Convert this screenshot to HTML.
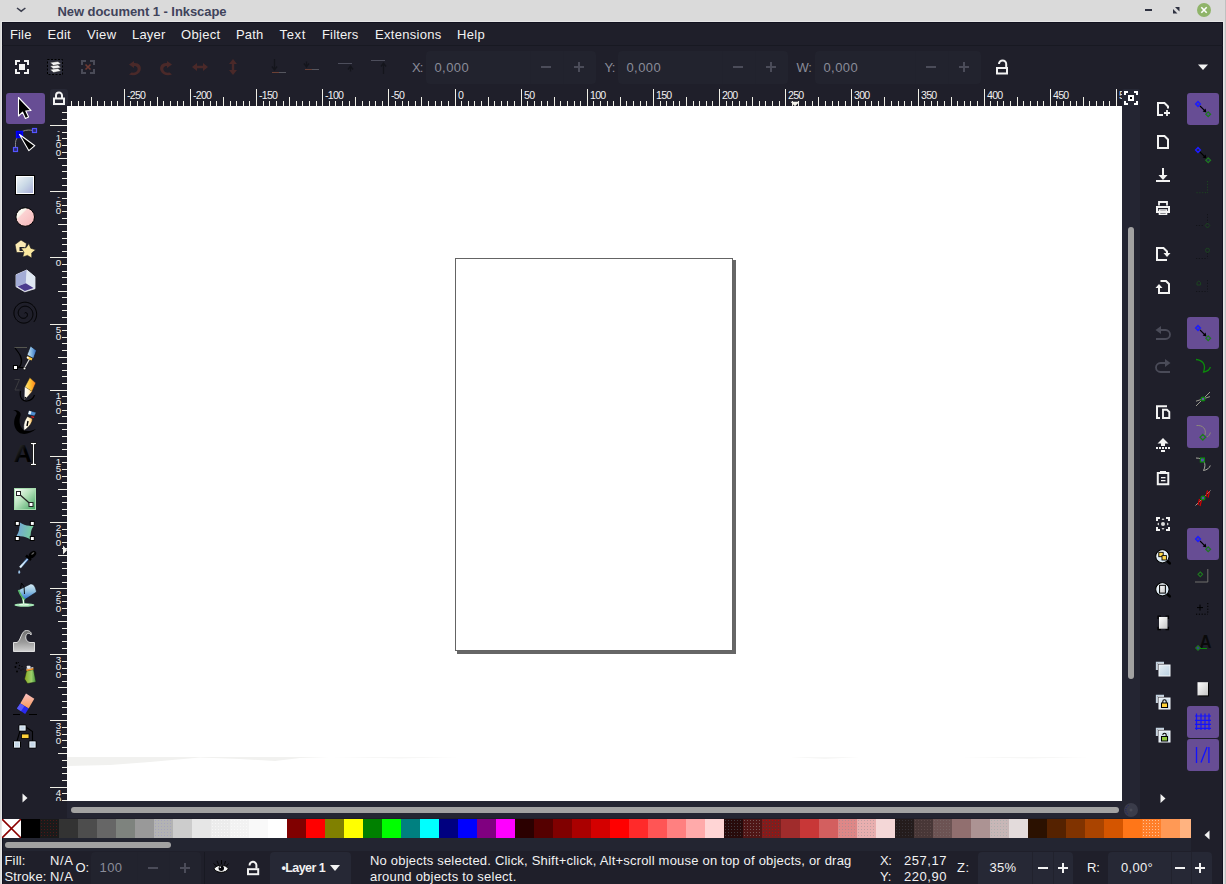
<!DOCTYPE html><html><head><meta charset='utf-8'><title>New document 1 - Inkscape</title><style>
*{box-sizing:border-box;margin:0;padding:0}
html,body{width:1226px;height:884px;overflow:hidden;background:#dadada;}
body{position:relative;font-family:"Liberation Sans","DejaVu Sans",sans-serif;font-size:13px;color:#f2f2f2;}
.abs{position:absolute}
#win{position:absolute;left:2px;top:22px;width:1221px;height:862px;background:#1f1f2a;border:1px solid #11111f;border-bottom:0}
.t{position:absolute;white-space:nowrap;line-height:16px;}
.spin{position:absolute;background:#262835;border-radius:4px;}
.spin i{position:absolute;top:0;bottom:0;width:1px;background:#21222d;}
.pb{position:absolute;background:#674d94;border-radius:3px;}
svg{position:absolute;overflow:visible}
</style></head><body>
<div class='t' style='left:57.5px;top:3.5px;font-size:13px;letter-spacing:-0.060px;font-weight:bold;color:#40435a;'>New document 1 - Inkscape</div>
<svg style='left:15px;top:5px' width='13' height='10'><path d='M2 3 L6.200 6.200 L10.400 3' fill='none' stroke='#3b3e4d' stroke-width='1.500'/></svg>
<div class='abs' style='left:1145px;top:9px;width:7px;height:2px;background:#2e3140'></div>
<svg style='left:1172px;top:6px' width='9' height='9'><path d='M3 1 H7.5 V5.5 Z M1 3 L5.5 7.5 H1 Z' fill='#2e3140'/></svg>
<svg style='left:1196px;top:2px' width='16' height='16'><circle cx='8' cy='8' r='7' fill='#8fb469'/><path d='M5.3 5.3 L10.7 10.7 M10.7 5.3 L5.3 10.7' stroke='#fff' stroke-width='1.6'/></svg>
<div class='abs' style='left:1px;top:21px;width:1223px;height:863px;background:#e5e5e5'></div>
<div class='abs' style='left:1225px;top:0;width:1px;height:884px;background:#c0c0c0'></div>
<div id='win'></div>
<div class='t' style='left:10px;top:26.8px;font-size:13px;letter-spacing:0.138px;'>File</div>
<div class='t' style='left:47.5px;top:26.8px;font-size:13px;letter-spacing:0.275px;'>Edit</div>
<div class='t' style='left:87px;top:26.8px;font-size:13px;letter-spacing:0.389px;'>View</div>
<div class='t' style='left:132px;top:26.8px;font-size:13px;letter-spacing:0.196px;'>Layer</div>
<div class='t' style='left:181px;top:26.8px;font-size:13px;letter-spacing:0.321px;'>Object</div>
<div class='t' style='left:236px;top:26.8px;font-size:13px;letter-spacing:0.189px;'>Path</div>
<div class='t' style='left:279.5px;top:26.8px;font-size:13px;letter-spacing:0.665px;'>Text</div>
<div class='t' style='left:322px;top:26.8px;font-size:13px;letter-spacing:0.159px;'>Filters</div>
<div class='t' style='left:375px;top:26.8px;font-size:13px;letter-spacing:0.291px;'>Extensions</div>
<div class='t' style='left:457px;top:26.8px;font-size:13px;letter-spacing:0.316px;'>Help</div>
<div class='abs' style='left:2px;top:45px;width:1221px;height:1px;background:#181922'></div>
<div class='t' style='left:412px;top:60.2px;font-size:13px;letter-spacing:-0.891px;color:#8a8c99;'>X:</div>
<div class='spin' style='left:426px;top:51px;width:170px;height:33px;background:#22232e'><i style='left:104px'></i><i style='left:137px'></i></div>
<div class='t' style='left:434.5px;top:60.2px;font-size:13px;letter-spacing:0.394px;color:#8a8c99;'>0,000</div>
<div class='abs' style='left:541px;top:66px;width:10px;height:2px;background:#4b4c59'></div>
<div class='abs' style='left:574px;top:66px;width:10px;height:2px;background:#4b4c59'></div>
<div class='abs' style='left:578px;top:62px;width:2px;height:10px;background:#4b4c59'></div>
<div class='t' style='left:604.5px;top:60.2px;font-size:13px;letter-spacing:-0.783px;color:#8a8c99;'>Y:</div>
<div class='spin' style='left:618px;top:51px;width:170px;height:33px;background:#22232e'><i style='left:104px'></i><i style='left:137px'></i></div>
<div class='t' style='left:626.5px;top:60.2px;font-size:13px;letter-spacing:0.394px;color:#8a8c99;'>0,000</div>
<div class='abs' style='left:733px;top:66px;width:10px;height:2px;background:#4b4c59'></div>
<div class='abs' style='left:766px;top:66px;width:10px;height:2px;background:#4b4c59'></div>
<div class='abs' style='left:770px;top:62px;width:2px;height:10px;background:#4b4c59'></div>
<div class='t' style='left:796.5px;top:60.2px;font-size:13px;letter-spacing:-0.323px;color:#8a8c99;'>W:</div>
<div class='spin' style='left:815px;top:51px;width:166px;height:33px;background:#22232e'><i style='left:100px'></i><i style='left:133px'></i></div>
<div class='t' style='left:823.5px;top:60.2px;font-size:13px;letter-spacing:0.394px;color:#8a8c99;'>0,000</div>
<div class='abs' style='left:926px;top:66px;width:10px;height:2px;background:#4b4c59'></div>
<div class='abs' style='left:959px;top:66px;width:10px;height:2px;background:#4b4c59'></div>
<div class='abs' style='left:963px;top:62px;width:2px;height:10px;background:#4b4c59'></div>
<div class='abs' style='left:67px;top:106px;width:1055px;height:695px;background:#fff'></div>
<svg style='left:0;top:0' width='1226' height='884'><path d='M67 757 H300 L330 758 H300 L275 761 L240 759 L200 757.500 L150 762 L110 765 L67 766 Z' fill='#f1f1ef'/><path d='M330 757 H460 L400 758.500 Z M790 757 H860 L825 759 Z M960 757 H1090 L1030 758.500 Z' fill='#f7f7f6'/></svg>
<div class='abs' style='left:733px;top:260px;width:3px;height:394px;background:#666'></div>
<div class='abs' style='left:457px;top:651px;width:279px;height:3px;background:#666'></div>
<div class='abs' style='left:455px;top:258px;width:278px;height:393px;border:1px solid #646464;background:#fff'></div>
<div class='abs' style='left:1122px;top:106px;width:18px;height:712px;background:#242532'></div>
<div class='abs' style='left:67px;top:801px;width:1073px;height:17px;background:#242532'></div>
<div class='abs' style='left:1128px;top:227px;width:6px;height:452px;background:#a2a2a2;border-radius:3px'></div>
<div class='abs' style='left:71px;top:807px;width:1048px;height:6px;background:#a2a2a2;border-radius:3px'></div>
<svg style='left:0;top:0' width='1226' height='884' shape-rendering='crispEdges'><path d='M71.5 101V106M78.5 101V106M84.5 101V106M91.5 97V106M97.5 101V106M104.5 101V106M111.5 101V106M117.5 101V106M124.5 89V106M130.5 101V106M137.5 101V106M144.5 101V106M150.5 101V106M157.5 97V106M163.5 101V106M170.5 101V106M177.5 101V106M183.5 101V106M190.5 89V106M197.5 101V106M203.5 101V106M210.5 101V106M216.5 101V106M223.5 97V106M230.5 101V106M236.5 101V106M243.5 101V106M249.5 101V106M256.5 89V106M263.5 101V106M269.5 101V106M276.5 101V106M283.5 101V106M289.5 97V106M296.5 101V106M302.5 101V106M309.5 101V106M316.5 101V106M322.5 89V106M329.5 101V106M335.5 101V106M342.5 101V106M349.5 101V106M355.5 97V106M362.5 101V106M369.5 101V106M375.5 101V106M382.5 101V106M388.5 89V106M395.5 101V106M402.5 101V106M408.5 101V106M415.5 101V106M421.5 97V106M428.5 101V106M435.5 101V106M441.5 101V106M448.5 101V106M455.5 89V106M461.5 101V106M468.5 101V106M474.5 101V106M481.5 101V106M488.5 97V106M494.5 101V106M501.5 101V106M507.5 101V106M514.5 101V106M521.5 89V106M527.5 101V106M534.5 101V106M541.5 101V106M547.5 101V106M554.5 97V106M560.5 101V106M567.5 101V106M574.5 101V106M580.5 101V106M587.5 89V106M593.5 101V106M600.5 101V106M607.5 101V106M613.5 101V106M620.5 97V106M626.5 101V106M633.5 101V106M640.5 101V106M646.5 101V106M653.5 89V106M660.5 101V106M666.5 101V106M673.5 101V106M679.5 101V106M686.5 97V106M693.5 101V106M699.5 101V106M706.5 101V106M712.5 101V106M719.5 89V106M726.5 101V106M732.5 101V106M739.5 101V106M746.5 101V106M752.5 97V106M759.5 101V106M765.5 101V106M772.5 101V106M779.5 101V106M785.5 89V106M792.5 101V106M798.5 101V106M805.5 101V106M812.5 101V106M818.5 97V106M825.5 101V106M832.5 101V106M838.5 101V106M845.5 101V106M851.5 89V106M858.5 101V106M865.5 101V106M871.5 101V106M878.5 101V106M884.5 97V106M891.5 101V106M898.5 101V106M904.5 101V106M911.5 101V106M918.5 89V106M924.5 101V106M931.5 101V106M937.5 101V106M944.5 101V106M951.5 97V106M957.5 101V106M964.5 101V106M970.5 101V106M977.5 101V106M984.5 89V106M990.5 101V106M997.5 101V106M1003.5 101V106M1010.5 101V106M1017.5 97V106M1023.5 101V106M1030.5 101V106M1037.5 101V106M1043.5 101V106M1050.5 89V106M1056.5 101V106M1063.5 101V106M1070.5 101V106M1076.5 101V106M1083.5 97V106M1089.5 101V106M1096.5 101V106M1103.5 101V106M1109.5 101V106M1116.5 89V106' stroke='#f0efe6' stroke-width='1' fill='none'/><path d='M62 112.5H67M62 119.5H67M50 125.5H67M62 132.5H67M62 138.5H67M62 145.5H67M62 152.5H67M58 158.5H67M62 165.5H67M62 171.5H67M62 178.5H67M62 185.5H67M50 191.5H67M62 198.5H67M62 205.5H67M62 211.5H67M62 218.5H67M58 224.5H67M62 231.5H67M62 238.5H67M62 244.5H67M62 251.5H67M50 257.5H67M62 264.5H67M62 271.5H67M62 277.5H67M62 284.5H67M58 291.5H67M62 297.5H67M62 304.5H67M62 310.5H67M62 317.5H67M50 324.5H67M62 330.5H67M62 337.5H67M62 343.5H67M62 350.5H67M58 357.5H67M62 363.5H67M62 370.5H67M62 376.5H67M62 383.5H67M50 390.5H67M62 396.5H67M62 403.5H67M62 410.5H67M62 416.5H67M58 423.5H67M62 429.5H67M62 436.5H67M62 443.5H67M62 449.5H67M50 456.5H67M62 462.5H67M62 469.5H67M62 476.5H67M62 482.5H67M58 489.5H67M62 496.5H67M62 502.5H67M62 509.5H67M62 515.5H67M50 522.5H67M62 529.5H67M62 535.5H67M62 542.5H67M62 548.5H67M58 555.5H67M62 562.5H67M62 568.5H67M62 575.5H67M62 582.5H67M50 588.5H67M62 595.5H67M62 601.5H67M62 608.5H67M62 615.5H67M58 621.5H67M62 628.5H67M62 634.5H67M62 641.5H67M62 648.5H67M50 654.5H67M62 661.5H67M62 668.5H67M62 674.5H67M62 681.5H67M58 687.5H67M62 694.5H67M62 701.5H67M62 707.5H67M62 714.5H67M50 720.5H67M62 727.5H67M62 734.5H67M62 740.5H67M62 747.5H67M58 753.5H67M62 760.5H67M62 767.5H67M62 773.5H67M62 780.5H67M50 787.5H67M62 793.5H67M62 800.5H67' stroke='#f0efe6' stroke-width='1' fill='none'/></svg>
<svg style='left:0;top:0' width='1226' height='884'><path d='M790.5 101.800 H799.500 L795 106.200 Z M63 545.500 L67.200 550 L63 554.500 Z' fill='#f4f3ec'/></svg>
<div class='abs' style='left:67px;top:87px;width:1055px;height:19px;overflow:hidden'>
<div class='t' style='left:60.0px;top:2.5px;font-size:10.6px;line-height:10px;color:#f0f0f0;letter-spacing:-0.75px'>-250</div>
<div class='t' style='left:126.0px;top:2.5px;font-size:10.6px;line-height:10px;color:#f0f0f0;letter-spacing:-0.75px'>-200</div>
<div class='t' style='left:192.0px;top:2.5px;font-size:10.6px;line-height:10px;color:#f0f0f0;letter-spacing:-0.75px'>-150</div>
<div class='t' style='left:258.0px;top:2.5px;font-size:10.6px;line-height:10px;color:#f0f0f0;letter-spacing:-0.75px'>-100</div>
<div class='t' style='left:324.0px;top:2.5px;font-size:10.6px;line-height:10px;color:#f0f0f0;letter-spacing:-0.75px'>-50</div>
<div class='t' style='left:391.0px;top:2.5px;font-size:10.6px;line-height:10px;color:#f0f0f0;letter-spacing:-0.75px'>0</div>
<div class='t' style='left:457.0px;top:2.5px;font-size:10.6px;line-height:10px;color:#f0f0f0;letter-spacing:-0.75px'>50</div>
<div class='t' style='left:523.0px;top:2.5px;font-size:10.6px;line-height:10px;color:#f0f0f0;letter-spacing:-0.75px'>100</div>
<div class='t' style='left:589.0px;top:2.5px;font-size:10.6px;line-height:10px;color:#f0f0f0;letter-spacing:-0.75px'>150</div>
<div class='t' style='left:655.0px;top:2.5px;font-size:10.6px;line-height:10px;color:#f0f0f0;letter-spacing:-0.75px'>200</div>
<div class='t' style='left:721.0px;top:2.5px;font-size:10.6px;line-height:10px;color:#f0f0f0;letter-spacing:-0.75px'>250</div>
<div class='t' style='left:787.0px;top:2.5px;font-size:10.6px;line-height:10px;color:#f0f0f0;letter-spacing:-0.75px'>300</div>
<div class='t' style='left:854.0px;top:2.5px;font-size:10.6px;line-height:10px;color:#f0f0f0;letter-spacing:-0.75px'>350</div>
<div class='t' style='left:920.0px;top:2.5px;font-size:10.6px;line-height:10px;color:#f0f0f0;letter-spacing:-0.75px'>400</div>
<div class='t' style='left:986.0px;top:2.5px;font-size:10.6px;line-height:10px;color:#f0f0f0;letter-spacing:-0.75px'>450</div>
<div class='t' style='left:1052.0px;top:2.5px;font-size:10.6px;line-height:10px;color:#f0f0f0;letter-spacing:-0.75px'>500</div>
</div>
<div class='abs' style='left:50px;top:106px;width:17px;height:695px;overflow:hidden'>
<div class='t' style='left:4.5px;top:21.1px;font-size:8px;line-height:8px;color:#f0f0f0;width:8px;text-align:center'>-</div>
<div class='t' style='left:4.5px;top:27.7px;font-size:9.8px;line-height:8px;color:#f0f0f0;width:8px;text-align:center'>1</div>
<div class='t' style='left:4.5px;top:35.4px;font-size:9.8px;line-height:8px;color:#f0f0f0;width:8px;text-align:center'>0</div>
<div class='t' style='left:4.5px;top:43.1px;font-size:9.8px;line-height:8px;color:#f0f0f0;width:8px;text-align:center'>0</div>
<div class='t' style='left:4.5px;top:87.1px;font-size:8px;line-height:8px;color:#f0f0f0;width:8px;text-align:center'>-</div>
<div class='t' style='left:4.5px;top:93.7px;font-size:9.8px;line-height:8px;color:#f0f0f0;width:8px;text-align:center'>5</div>
<div class='t' style='left:4.5px;top:101.4px;font-size:9.8px;line-height:8px;color:#f0f0f0;width:8px;text-align:center'>0</div>
<div class='t' style='left:4.5px;top:152.5px;font-size:9.8px;line-height:8px;color:#f0f0f0;width:8px;text-align:center'>0</div>
<div class='t' style='left:4.5px;top:219.5px;font-size:9.8px;line-height:8px;color:#f0f0f0;width:8px;text-align:center'>5</div>
<div class='t' style='left:4.5px;top:227.2px;font-size:9.8px;line-height:8px;color:#f0f0f0;width:8px;text-align:center'>0</div>
<div class='t' style='left:4.5px;top:285.5px;font-size:9.8px;line-height:8px;color:#f0f0f0;width:8px;text-align:center'>1</div>
<div class='t' style='left:4.5px;top:293.2px;font-size:9.8px;line-height:8px;color:#f0f0f0;width:8px;text-align:center'>0</div>
<div class='t' style='left:4.5px;top:300.9px;font-size:9.8px;line-height:8px;color:#f0f0f0;width:8px;text-align:center'>0</div>
<div class='t' style='left:4.5px;top:351.5px;font-size:9.8px;line-height:8px;color:#f0f0f0;width:8px;text-align:center'>1</div>
<div class='t' style='left:4.5px;top:359.2px;font-size:9.8px;line-height:8px;color:#f0f0f0;width:8px;text-align:center'>5</div>
<div class='t' style='left:4.5px;top:366.9px;font-size:9.8px;line-height:8px;color:#f0f0f0;width:8px;text-align:center'>0</div>
<div class='t' style='left:4.5px;top:417.5px;font-size:9.8px;line-height:8px;color:#f0f0f0;width:8px;text-align:center'>2</div>
<div class='t' style='left:4.5px;top:425.2px;font-size:9.8px;line-height:8px;color:#f0f0f0;width:8px;text-align:center'>0</div>
<div class='t' style='left:4.5px;top:432.9px;font-size:9.8px;line-height:8px;color:#f0f0f0;width:8px;text-align:center'>0</div>
<div class='t' style='left:4.5px;top:483.5px;font-size:9.8px;line-height:8px;color:#f0f0f0;width:8px;text-align:center'>2</div>
<div class='t' style='left:4.5px;top:491.2px;font-size:9.8px;line-height:8px;color:#f0f0f0;width:8px;text-align:center'>5</div>
<div class='t' style='left:4.5px;top:498.9px;font-size:9.8px;line-height:8px;color:#f0f0f0;width:8px;text-align:center'>0</div>
<div class='t' style='left:4.5px;top:549.5px;font-size:9.8px;line-height:8px;color:#f0f0f0;width:8px;text-align:center'>3</div>
<div class='t' style='left:4.5px;top:557.2px;font-size:9.8px;line-height:8px;color:#f0f0f0;width:8px;text-align:center'>0</div>
<div class='t' style='left:4.5px;top:564.9px;font-size:9.8px;line-height:8px;color:#f0f0f0;width:8px;text-align:center'>0</div>
<div class='t' style='left:4.5px;top:615.5px;font-size:9.8px;line-height:8px;color:#f0f0f0;width:8px;text-align:center'>3</div>
<div class='t' style='left:4.5px;top:623.2px;font-size:9.8px;line-height:8px;color:#f0f0f0;width:8px;text-align:center'>5</div>
<div class='t' style='left:4.5px;top:630.9px;font-size:9.8px;line-height:8px;color:#f0f0f0;width:8px;text-align:center'>0</div>
<div class='t' style='left:4.5px;top:682.5px;font-size:9.8px;line-height:8px;color:#f0f0f0;width:8px;text-align:center'>4</div>
<div class='t' style='left:4.5px;top:690.2px;font-size:9.8px;line-height:8px;color:#f0f0f0;width:8px;text-align:center'>0</div>
<div class='t' style='left:4.5px;top:697.9px;font-size:9.8px;line-height:8px;color:#f0f0f0;width:8px;text-align:center'>0</div>
</div>
<div class='abs' style='left:50px;top:89px;width:18px;height:17px;background:#272835;border-radius:3px'></div>
<div class='abs' style='left:2px;top:819px;width:1189px;height:19px;overflow:hidden'>
<div class='abs' style='left:0;top:0;width:19px;height:19px;background:#fff'></div>
<svg style='left:0;top:0' width='19' height='19'><path d='M0 0L19 19M19 0L0 19' stroke='#8b0000' stroke-width='1.6'/></svg>
<div class='abs' style='left:19px;top:0;width:19px;height:19px;background:#000000;'></div>
<div class='abs' style='left:38px;top:0;width:19px;height:19px;background:radial-gradient(circle,rgba(120,20,20,.55) .7px,transparent 1px) 0 0/3px 3px,#1a1a1a;'></div>
<div class='abs' style='left:57px;top:0;width:19px;height:19px;background:#333333;'></div>
<div class='abs' style='left:76px;top:0;width:19px;height:19px;background:#4d4d4d;'></div>
<div class='abs' style='left:95px;top:0;width:19px;height:19px;background:#666666;'></div>
<div class='abs' style='left:114px;top:0;width:19px;height:19px;background:#7e837e;'></div>
<div class='abs' style='left:133px;top:0;width:19px;height:19px;background:#999999;'></div>
<div class='abs' style='left:152px;top:0;width:19px;height:19px;background:radial-gradient(circle,rgba(150,150,200,.5) .7px,transparent 1px) 0 0/3px 3px,#b3b3b3;'></div>
<div class='abs' style='left:171px;top:0;width:19px;height:19px;background:#cccccc;'></div>
<div class='abs' style='left:190px;top:0;width:19px;height:19px;background:#e6e6e6;'></div>
<div class='abs' style='left:209px;top:0;width:19px;height:19px;background:radial-gradient(circle,rgba(255,255,255,.5) .7px,transparent 1px) 0 0/3px 3px,#ececec;'></div>
<div class='abs' style='left:228px;top:0;width:19px;height:19px;background:radial-gradient(circle,rgba(255,255,255,.5) .7px,transparent 1px) 0 0/3px 3px,#f2f2f2;'></div>
<div class='abs' style='left:247px;top:0;width:19px;height:19px;background:#f9f9f9;'></div>
<div class='abs' style='left:266px;top:0;width:19px;height:19px;background:#ffffff;'></div>
<div class='abs' style='left:285px;top:0;width:19px;height:19px;background:#800000;'></div>
<div class='abs' style='left:304px;top:0;width:19px;height:19px;background:#ff0000;'></div>
<div class='abs' style='left:323px;top:0;width:19px;height:19px;background:#808000;'></div>
<div class='abs' style='left:342px;top:0;width:19px;height:19px;background:#ffff00;'></div>
<div class='abs' style='left:361px;top:0;width:19px;height:19px;background:#008000;'></div>
<div class='abs' style='left:380px;top:0;width:19px;height:19px;background:#00ff00;'></div>
<div class='abs' style='left:399px;top:0;width:19px;height:19px;background:#008080;'></div>
<div class='abs' style='left:418px;top:0;width:19px;height:19px;background:#00ffff;'></div>
<div class='abs' style='left:437px;top:0;width:19px;height:19px;background:#000080;'></div>
<div class='abs' style='left:456px;top:0;width:19px;height:19px;background:#0000ff;'></div>
<div class='abs' style='left:475px;top:0;width:19px;height:19px;background:#800080;'></div>
<div class='abs' style='left:494px;top:0;width:19px;height:19px;background:#ff00ff;'></div>
<div class='abs' style='left:513px;top:0;width:19px;height:19px;background:#2b0000;'></div>
<div class='abs' style='left:532px;top:0;width:19px;height:19px;background:#550000;'></div>
<div class='abs' style='left:551px;top:0;width:19px;height:19px;background:#800000;'></div>
<div class='abs' style='left:570px;top:0;width:19px;height:19px;background:#aa0000;'></div>
<div class='abs' style='left:589px;top:0;width:19px;height:19px;background:#d40000;'></div>
<div class='abs' style='left:608px;top:0;width:19px;height:19px;background:#ff0000;'></div>
<div class='abs' style='left:627px;top:0;width:19px;height:19px;background:#ff2a2a;'></div>
<div class='abs' style='left:646px;top:0;width:19px;height:19px;background:#ff5555;'></div>
<div class='abs' style='left:665px;top:0;width:19px;height:19px;background:#ff8080;'></div>
<div class='abs' style='left:684px;top:0;width:19px;height:19px;background:#ffaaaa;'></div>
<div class='abs' style='left:703px;top:0;width:19px;height:19px;background:#ffd5d5;'></div>
<div class='abs' style='left:722px;top:0;width:19px;height:19px;background:radial-gradient(circle,rgba(90,110,120,.5) .7px,transparent 1px) 0 0/3px 3px,#280b0b;'></div>
<div class='abs' style='left:741px;top:0;width:19px;height:19px;background:radial-gradient(circle,rgba(150,140,140,.55) .7px,transparent 1px) 0 0/3px 3px,#501616;'></div>
<div class='abs' style='left:760px;top:0;width:19px;height:19px;background:radial-gradient(circle,rgba(200,0,0,.8) .7px,transparent 1px) 0 0/3px 3px,#782121;'></div>
<div class='abs' style='left:779px;top:0;width:19px;height:19px;background:#a02c2c;'></div>
<div class='abs' style='left:798px;top:0;width:19px;height:19px;background:#c83737;'></div>
<div class='abs' style='left:817px;top:0;width:19px;height:19px;background:#d35f5f;'></div>
<div class='abs' style='left:836px;top:0;width:19px;height:19px;background:radial-gradient(circle,rgba(140,140,150,.5) .7px,transparent 1px) 0 0/3px 3px,#de8787;'></div>
<div class='abs' style='left:855px;top:0;width:19px;height:19px;background:radial-gradient(circle,rgba(140,140,150,.45) .7px,transparent 1px) 0 0/3px 3px,#e9afaf;'></div>
<div class='abs' style='left:874px;top:0;width:19px;height:19px;background:#f4d7d7;'></div>
<div class='abs' style='left:893px;top:0;width:19px;height:19px;background:radial-gradient(circle,rgba(70,70,80,.5) .7px,transparent 1px) 0 0/3px 3px,#241c1c;'></div>
<div class='abs' style='left:912px;top:0;width:19px;height:19px;background:radial-gradient(circle,rgba(110,90,90,.5) .7px,transparent 1px) 0 0/3px 3px,#483737;'></div>
<div class='abs' style='left:931px;top:0;width:19px;height:19px;background:radial-gradient(circle,rgba(130,120,120,.4) .7px,transparent 1px) 0 0/3px 3px,#6c5353;'></div>
<div class='abs' style='left:950px;top:0;width:19px;height:19px;background:#916f6f;'></div>
<div class='abs' style='left:969px;top:0;width:19px;height:19px;background:#ac9393;'></div>
<div class='abs' style='left:988px;top:0;width:19px;height:19px;background:radial-gradient(circle,rgba(150,170,170,.5) .7px,transparent 1px) 0 0/3px 3px,#c8b7b7;'></div>
<div class='abs' style='left:1007px;top:0;width:19px;height:19px;background:#e3dbdb;'></div>
<div class='abs' style='left:1026px;top:0;width:19px;height:19px;background:#2b1100;'></div>
<div class='abs' style='left:1045px;top:0;width:19px;height:19px;background:#552200;'></div>
<div class='abs' style='left:1064px;top:0;width:19px;height:19px;background:#803300;'></div>
<div class='abs' style='left:1083px;top:0;width:19px;height:19px;background:#aa4400;'></div>
<div class='abs' style='left:1102px;top:0;width:19px;height:19px;background:#d45500;'></div>
<div class='abs' style='left:1121px;top:0;width:19px;height:19px;background:#ff7618;'></div>
<div class='abs' style='left:1140px;top:0;width:19px;height:19px;background:radial-gradient(circle,rgba(255,220,190,.7) .7px,transparent 1px) 0 0/3px 3px,#ff7f2a;'></div>
<div class='abs' style='left:1159px;top:0;width:19px;height:19px;background:#ff9955;'></div>
<div class='abs' style='left:1178px;top:0;width:19px;height:19px;background:#ffb380;'></div>
</div>
<div class='abs' style='left:3px;top:838px;width:1188px;height:13px;background:#232531'></div>
<div class='abs' style='left:5px;top:842px;width:166px;height:6px;background:#a2a2a2;border-radius:3px'></div>
<div class='t' style='left:4.5px;top:852.5px;font-size:13px;letter-spacing:0.156px;'>Fill:</div>
<div class='t' style='left:4.5px;top:868.5px;font-size:13px;letter-spacing:0.116px;'>Stroke:</div>
<div class='t' style='left:50px;top:852.5px;font-size:13px;letter-spacing:0.610px;'>N/A</div>
<div class='t' style='left:50px;top:868.5px;font-size:13px;letter-spacing:0.610px;'>N/A</div>
<div class='t' style='left:75.5px;top:860.3px;font-size:13px;letter-spacing:-0.112px;'>O:</div>
<div class='spin' style='left:91px;top:852px;width:110px;height:40px;background:#22232e'><i style='left:46px'></i><i style='left:78px'></i></div>
<div class='t' style='left:99.5px;top:860.3px;font-size:13px;letter-spacing:0.436px;color:#8a8c99;'>100</div>
<div class='abs' style='left:148px;top:867px;width:10px;height:2px;background:#4b4c59'></div>
<div class='abs' style='left:180px;top:867px;width:10px;height:2px;background:#4b4c59'></div>
<div class='abs' style='left:184px;top:863px;width:2px;height:10px;background:#4b4c59'></div>
<div class='abs' style='left:204px;top:852px;width:1px;height:32px;background:#181922'></div>
<div class='spin' style='left:270px;top:852px;width:81px;height:40px'></div>
<div class='t' style='left:281.5px;top:860.3px;font-size:12.5px;letter-spacing:-0.582px;font-weight:bold;'>•Layer 1</div>
<svg style='left:330px;top:865px' width='10' height='6'><path d='M0 0H10L5 6Z' fill='#f2f2f2'/></svg>
<div class='t' style='left:370px;top:852.5px;font-size:13px;letter-spacing:0.201px;'>No objects selected. Click, Shift+click, Alt+scroll mouse on top of objects, or drag</div>
<div class='t' style='left:370px;top:868.5px;font-size:13px;letter-spacing:0.223px;'>around objects to select.</div>
<div class='t' style='left:880px;top:852.5px;font-size:13px;letter-spacing:-0.391px;'>X:</div>
<div class='t' style='left:880px;top:868.5px;font-size:13px;letter-spacing:-0.283px;'>Y:</div>
<div class='t' style='left:904px;top:852.5px;font-size:13px;letter-spacing:0.540px;'>257,17</div>
<div class='t' style='left:904px;top:868.5px;font-size:13px;letter-spacing:0.540px;'>220,90</div>
<div class='t' style='left:957px;top:860.3px;font-size:13px;letter-spacing:0.474px;'>Z:</div>
<div class='spin' style='left:978px;top:852px;width:95px;height:40px;'><i style='left:54px'></i><i style='left:75px'></i></div>
<div class='t' style='left:989.5px;top:860.3px;font-size:13px;letter-spacing:0.327px;'>35%</div>
<div class='t' style='left:1087px;top:860.3px;font-size:13px;letter-spacing:-0.250px;'>R:</div>
<div class='spin' style='left:1108px;top:852px;width:104px;height:40px;'><i style='left:63px'></i><i style='left:83px'></i></div>
<div class='t' style='left:1121px;top:860.3px;font-size:13px;letter-spacing:0.300px;'>0,00°</div>
<div class='abs' style='left:1038px;top:867px;width:10px;height:2px;background:#f2f2f2'></div>
<div class='abs' style='left:1175px;top:867px;width:10px;height:2px;background:#f2f2f2'></div>
<div class='abs' style='left:1058px;top:867px;width:10px;height:2px;background:#f2f2f2'></div>
<div class='abs' style='left:1062px;top:863px;width:2px;height:10px;background:#f2f2f2'></div>
<div class='abs' style='left:1195px;top:867px;width:10px;height:2px;background:#f2f2f2'></div>
<div class='abs' style='left:1199px;top:863px;width:2px;height:10px;background:#f2f2f2'></div>
<div class='pb' style='left:6px;top:93px;width:39px;height:31px'></div>
<div class='pb' style='left:1187px;top:93px;width:32px;height:32px'></div>
<div class='pb' style='left:1187px;top:317px;width:32px;height:32px'></div>
<div class='pb' style='left:1187px;top:416px;width:32px;height:32px'></div>
<div class='pb' style='left:1187px;top:528px;width:32px;height:32px'></div>
<div class='pb' style='left:1187px;top:706px;width:32px;height:32px'></div>
<div class='pb' style='left:1187px;top:739px;width:32px;height:32px'></div>
<svg style='left:0;top:0' width='1226' height='884'>
<defs>
<linearGradient id='gRect' x1='0' y1='0' x2='1' y2='1'><stop offset='0' stop-color='#f4f7f8'/><stop offset='.5' stop-color='#c9d8e6'/><stop offset='1' stop-color='#a3a6d6'/></linearGradient>
<linearGradient id='gEll' x1='0' y1='0' x2='1' y2='1'><stop offset='0' stop-color='#ffffff'/><stop offset='.30' stop-color='#f8f4ea'/><stop offset='.36' stop-color='#fbd2d2'/><stop offset='1' stop-color='#f5b5b8'/></linearGradient>
<linearGradient id='gGrad' x1='0' y1='0' x2='1' y2='1'><stop offset='0' stop-color='#ffffff'/><stop offset='.45' stop-color='#b6e2bb'/><stop offset='1' stop-color='#3fa25f'/></linearGradient>
<linearGradient id='gMesh' x1='0' y1='0' x2='1' y2='0'><stop offset='0' stop-color='#74a9d6'/><stop offset='1' stop-color='#78cf9c'/></linearGradient>
<linearGradient id='gPen' x1='0' y1='0' x2='1' y2='0'><stop offset='0' stop-color='#d7ecf7'/><stop offset='.5' stop-color='#7eb3e0'/><stop offset='1' stop-color='#2d63b8'/></linearGradient>
<linearGradient id='gPencil' x1='0' y1='0' x2='1' y2='0'><stop offset='0' stop-color='#ffe680'/><stop offset='.5' stop-color='#ffc233'/><stop offset='1' stop-color='#ff7f1a'/></linearGradient>
<linearGradient id='gTip' x1='0' y1='0' x2='1' y2='0'><stop offset='0' stop-color='#ffffff'/><stop offset='.6' stop-color='#fff3d0'/><stop offset='1' stop-color='#ffb84d'/></linearGradient>
<linearGradient id='gBucket' x1='0' y1='0' x2='0' y2='1'><stop offset='0' stop-color='#d5ecf5'/><stop offset='.5' stop-color='#8fc0e0'/><stop offset='1' stop-color='#2a6fd0'/></linearGradient>
<linearGradient id='gTweak' x1='0' y1='0' x2='0' y2='1'><stop offset='0' stop-color='#6e6e6e'/><stop offset='.55' stop-color='#9a9a9a'/><stop offset='1' stop-color='#d0d0d0'/></linearGradient>
<linearGradient id='gSpray' x1='0' y1='0' x2='1' y2='0'><stop offset='0' stop-color='#8aa820'/><stop offset='.6' stop-color='#9ccf6a'/><stop offset='1' stop-color='#3f8f3a'/></linearGradient>
<linearGradient id='gEras' x1='0' y1='0' x2='0' y2='1'><stop offset='0' stop-color='#f9c0c4'/><stop offset='1' stop-color='#f89a55'/></linearGradient>
<linearGradient id='gPage' x1='0' y1='0' x2='1' y2='1'><stop offset='0' stop-color='#ffffff'/><stop offset='1' stop-color='#c4c4c4'/></linearGradient>
<linearGradient id='gDup' x1='0' y1='0' x2='1' y2='1'><stop offset='0' stop-color='#e6eef4'/><stop offset='1' stop-color='#b9cfe0'/></linearGradient>
<linearGradient id='gA' x1='0' y1='0' x2='1' y2='1'><stop offset='0' stop-color='#555'/><stop offset='.5' stop-color='#000'/><stop offset='1' stop-color='#000'/></linearGradient>
<radialGradient id='gGlass' cx='.4' cy='.35' r='.7'><stop offset='0' stop-color='#ffffff'/><stop offset='1' stop-color='#bcd6ea'/></radialGradient>
</defs>
<path d='M15 60h5v2h-3v3h-2zM29 60h-5v2h3v3h2zM15 74h5v-2h-3v-3h-2zM29 74h-5v-2h3v-3h2z' fill='#f2f2f2'/>
<rect x='19' y='64' width='6' height='6' fill='#f2f2f2'/>
<rect x='47.5' y='59.5' width='15' height='15' fill='#292a37' stroke='#000' stroke-width='1' stroke-dasharray='2 1.5'/>
<path d='M50 62.5 L58 61.5 L61 64.1 L53.5 65.5 Z' fill='#f4f4f4' stroke='#1a1a1a' stroke-width='.4'/>
<path d='M50 66 L58 65 L61 67.6 L53.5 69 Z' fill='#f4f4f4' stroke='#1a1a1a' stroke-width='.4'/>
<path d='M50 69.5 L58 68.5 L61 71.1 L53.5 72.5 Z' fill='#f4f4f4' stroke='#1a1a1a' stroke-width='.4'/>
<path d='M81 60h5v2h-3v3h-2zM95 60h-5v2h3v3h2zM81 74h5v-2h-3v-3h-2zM95 74h-5v-2h3v-3h2z' fill='#4a4b57'/>
<path d='M85.5 64.5 L90.5 69.5 M90.5 64.5 L85.5 69.5' stroke='#6e3a33' stroke-width='1.6'/>
<path d='M134 61 l-5 3.5 l5 3.5 v-2 c3 0 4 2 3.5 4 c-.5 2 -3 3 -6 2.5 l-2.5 2 c5 2 10 0 11.5 -4 c1.5 -5 -2 -8 -6.500 -7.500 z' fill='#4a2929'/>
<path d='M167 61 l5 3.500 l-5 3.500 v-2 c-3 0 -4 2 -3.500 4 c.5 2 3 3 6 2.500 l2.500 2 c-5 2 -10 0 -11.500 -4 c-1.500 -5 2 -8 6.500 -7.500 z' fill='#4a2929'/>
<path d='M192 67 l5 -4 v2.800 h6 v-2.800 l5 4 l-5 4 v-2.800 h-6 v2.800 z' fill='#4a2929'/>
<path d='M233 59 l4 5 h-2.800 v6 h2.800 l-4 5 l-4 -5 h2.800 v-6 h-2.800 z' fill='#4a2929'/>
<path d='M274.500 59 v10 M272 66.500 l2.500 3.500 l2.500 -3.500' stroke='#14151c' stroke-width='1.300' fill='none'/>
<rect x='272' y='72' width='7' height='1' fill='#6b4035'/><rect x='279' y='72' width='7' height='1' fill='#55565f'/>
<path d='M306.500 61.500 v5 M304 63.500 l2.500 3.300 l2.500 -3.300' stroke='#14151c' stroke-width='1.300' fill='none'/>
<rect x='305' y='69' width='7' height='1' fill='#6b4035'/><rect x='312' y='69' width='7' height='1' fill='#55565f'/>
<rect x='338' y='63' width='14' height='1' fill='#4d4e5c'/>
<path d='M350.500 71.500 v-5 M348 69.500 l2.500 -3.300 l2.500 3.300' stroke='#14151c' stroke-width='1.300' fill='none'/>
<rect x='371' y='60' width='14' height='1' fill='#4d4e5c'/>
<path d='M383.500 74 v-10 M381 66.500 l2.500 -3.500 l2.500 3.500' stroke='#14151c' stroke-width='1.300' fill='none'/>
<rect x='997' y='68' width='10' height='5.500' fill='none' stroke='#f2f2f2' stroke-width='2'/><path d='M999 64 a3.600 3.600 0 0 1 7.200 0 v3' fill='none' stroke='#f2f2f2' stroke-width='2'/>
<path d='M1198 64.500 h10 l-5 5.500 z' fill='#f2f2f2'/>
<rect x='54' y='98.500' width='10' height='5.500' fill='none' stroke='#f2f2f2' stroke-width='2'/>
<path d='M56 98 v-2.500 a3 3 0 0 1 6 0 v2.500' fill='none' stroke='#f2f2f2' stroke-width='2'/>
<rect x='1122' y='89' width='18' height='17' rx='2' fill='#262835'/>
<path d='M1124 91h4v2h-2v2h-2zM1138 91h-4v2h2v2h2zM1124 105h4v-2h-2v-2h-2zM1138 105h-4v-2h2v-2h2z' fill='#ffffff'/>
<rect x='1128' y='95' width='6' height='6' fill='#fff'/><rect x='1130' y='97' width='2' height='2' fill='#000'/>
<path d='M18.500 97.500 V116 L22.600 112.200 L25.400 118.400 L28.600 116.900 L25.800 111 L31 110.500 Z' fill='#000' stroke='#fff' stroke-width='1.100' stroke-linejoin='round'/>
<path d='M22 131.500 C27 129.500 30 130 33 130.500' stroke='#8a8a8a' stroke-width='1' fill='none'/>
<path d='M17 138 C15 141 15.500 144 15.500 147' stroke='#8a8a8a' stroke-width='1' fill='none'/>
<rect x='16.500' y='131.500' width='6' height='6' fill='#0000c8' stroke='#0000ff' stroke-width='1.400'/>
<rect x='32.500' y='128.500' width='4' height='4' fill='#2a2a70' stroke='#5555ff' stroke-width='1.200'/>
<rect x='13.500' y='147.500' width='4' height='4' fill='#2a2a70' stroke='#5555ff' stroke-width='1.200'/>
<path d='M19.500 134.500 L34.800 145.700 L28.900 150.700 Z' fill='#000' stroke='#fff' stroke-width='1.100' stroke-linejoin='round'/>
<rect x='15.500' y='175.500' width='19' height='19' fill='url(#gRect)' stroke='#000' stroke-width='1'/>
<rect x='16.500' y='176.500' width='17' height='17' fill='none' stroke='#fff' stroke-width='1'/>
<circle cx='25.200' cy='217' r='9.300' fill='url(#gEll)' stroke='#000' stroke-width='1'/>
<path d='M21 240 L26.500 243.500 L24.500 252.500 L16.500 252.500 L15 244.500 Z' fill='#fbeab4' stroke='#15151c' stroke-width='.6'/>
<path d='M19.500 247 h5 v4 h-5z' fill='#1e1f29'/>
<path d='M28.9 243.6L30.8 248.3L35.7 249.8L31.7 253.0L31.8 258.1L27.5 255.4L22.7 257.0L24.0 252.1L20.9 248.0L26.0 247.7Z' fill='#fbe9a0' stroke='#15151c' stroke-width='.6'/>
<path d='M26.800 270 L16 274.800 L16 286.700 L24.800 291.800 L35 288.700 L35 276.800 Z' fill='#e3e9f3' stroke='#eef0f6' stroke-width='.8'/>
<path d='M26.800 270 L16 274.800 L16 286.700 L25.800 283.300 Z' fill='#a3acd6'/>
<path d='M26.800 270 L35 276.800 L35 288.700 L25.800 283.300 Z' fill='#dfe7f2'/>
<path d='M17.500 286.500 L25.800 283.300 L33.500 288 L24.800 291 Z' fill='#4b3b8e'/>
<path d='M24.63 313.16L24.79 312.96L24.95 312.82L25.12 312.72L25.28 312.65L25.45 312.60L25.63 312.58L25.80 312.59L25.97 312.62L26.14 312.66L26.30 312.73L26.46 312.82L26.61 312.92L26.75 313.04L26.88 313.18L27.00 313.34L27.11 313.50L27.20 313.69L27.29 313.88L27.35 314.08L27.40 314.29L27.43 314.51L27.44 314.74L27.44 314.97L27.41 315.21L27.37 315.45L27.31 315.68L27.23 315.92L27.13 316.15L27.00 316.38L26.86 316.61L26.70 316.82L26.53 317.03L26.33 317.23L26.12 317.41L25.89 317.58L25.65 317.74L25.39 317.88L25.11 318.00L24.83 318.11L24.54 318.20L24.23 318.26L23.92 318.31L23.60 318.33L23.28 318.33L22.95 318.31L22.62 318.26L22.29 318.19L21.96 318.10L21.64 317.98L21.32 317.84L21.01 317.68L20.71 317.49L20.42 317.28L20.14 317.05L19.87 316.80L19.62 316.53L19.39 316.23L19.17 315.92L18.98 315.59L18.80 315.25L18.65 314.89L18.52 314.52L18.42 314.14L18.34 313.74L18.29 313.34L18.26 312.94L18.26 312.53L18.29 312.11L18.35 311.70L18.44 311.29L18.56 310.88L18.70 310.47L18.87 310.08L19.07 309.69L19.30 309.32L19.56 308.95L19.84 308.61L20.14 308.28L20.47 307.97L20.82 307.68L21.19 307.41L21.59 307.17L22.00 306.95L22.43 306.76L22.87 306.59L23.32 306.46L23.79 306.35L24.27 306.28L24.75 306.24L25.24 306.23L25.73 306.25L26.22 306.31L26.71 306.40L27.20 306.52L27.68 306.67L28.15 306.86L28.61 307.08L29.05 307.34L29.48 307.62L29.90 307.93L30.29 308.27L30.67 308.64L31.02 309.04L31.34 309.46L31.64 309.90L31.91 310.37L32.15 310.85L32.36 311.35L32.53 311.87L32.67 312.40L32.78 312.94L32.85 313.50L32.88 314.05L32.88 314.61L32.84 315.18L32.76 315.74L32.64 316.30L32.49 316.85L32.30 317.39L32.07 317.92L31.80 318.44L31.51 318.94L31.17 319.42L30.81 319.89L30.41 320.33L29.98 320.74L29.52 321.13L29.04 321.48L28.53 321.81L28.00 322.10L27.45 322.36L26.88 322.58L26.29 322.76L25.69 322.91L25.08 323.02L24.46 323.08L23.84 323.11L23.21 323.09L22.58 323.03L21.96 322.93L21.34 322.79L20.72 322.61L20.12 322.38L19.53 322.12L18.96 321.82L18.41 321.47L17.88 321.09L17.37 320.68L16.90 320.23L16.44 319.75L16.03 319.23L15.64 318.69L15.29 318.12L14.97 317.53L14.70 316.92L14.46 316.28L14.27 315.63L14.12 314.97L14.01 314.29L13.95 313.61L13.94 312.92L13.96 312.23L14.04 311.54L14.16 310.86L14.32 310.18L14.54 309.51L14.79 308.85L15.09 308.21L15.43 307.59L15.82 306.99L16.24 306.42L16.70 305.87L17.20 305.36L17.73 304.87L18.30 304.42L18.90 304.01L19.52 303.63L20.17 303.30L20.85 303.01L21.54 302.76L22.25 302.56L22.98 302.41L23.71 302.30L24.45 302.24L25.20 302.24L25.95 302.28L26.70 302.37L27.44 302.51L28.17 302.70L28.90 302.93L29.60 303.22L30.29 303.55L30.96 303.93L31.60 304.35L32.22 304.82L32.80 305.33L33.35 305.87L33.87 306.45L34.35 307.07L34.79 307.72L35.18 308.40L35.53 309.11L35.84 309.84L36.09 310.59L36.30 311.35L36.46 312.13L36.56 312.93L36.62 313.73L36.62 314.53L36.56 315.34L36.46 316.14L36.30 316.93L36.09 317.72L35.82 318.49L35.51 319.25L35.14 319.98L34.73 320.69L34.27 321.38L33.76 322.03' fill='none' stroke='#000' stroke-width='1'/>
<path d='M14.500 347.500 H27' stroke='#55564f' stroke-width='1'/>
<path d='M15 348 C19 353 23 358 21 364 C20 367 18 367.500 17 367.500 H24' stroke='#000' stroke-width='1.200' fill='none'/>
<path d='M29.500 359 L24.500 368' stroke='#d8d8d8' stroke-width='1.200'/>
<path d='M30.500 346 L36.500 350.500 L33.500 358.500 L27 355 Z' fill='url(#gPen)' stroke='#10131c' stroke-width='.7'/>
<path d='M27.400 356 L32.500 358.600 L31.500 360.400 L27 358.600 Z' fill='#ffc83a'/>
<path d='M27 356.500 l2 1 l-.6 1.200 l-1.800 -.8z' fill='#fff'/>
<rect x='13.500' y='365.500' width='4' height='4' fill='#fff' stroke='#000' stroke-width='1'/>
<circle cx='24.500' cy='368.500' r='1.300' fill='#fff' stroke='#000' stroke-width='.7'/>
<path d='M14.500 379.500 H19.500 L15 390 H19.500' stroke='#3c3c40' stroke-width='1' fill='none'/>
<path d='M20.500 391 C19 398 23 401.500 27 401 C31 400.500 33.500 398 34.500 395' stroke='#000' stroke-width='1.200' fill='none'/>
<path d='M29.800 377.500 L35.800 383 L32 391.500 L24.800 387 Z' fill='url(#gPencil)' stroke='#15151c' stroke-width='.5'/>
<path d='M24.800 387 L32 391.500 L24.400 400 Z' fill='url(#gTip)'/>
<path d='M24.600 396.500 L26.500 397.500 L24.400 400 Z' fill='#000'/>
<path d='M13 410 C18 410 21.500 412 20.500 415.500 C18.500 421 19.500 426.500 23.500 430 C27 432 31.500 431 36 429 C31 433.500 23.500 435.500 19 432.500 C13 428 13 420 16.500 414.500 C17.500 412.500 16 411 13 410 Z' fill='#000'/>
<path d='M27.500 416.500 L32.300 418.500 C33 422 29 427.500 24 430.500 C23 425 24.500 420 27.500 416.500 Z' fill='url(#gTip)' stroke='#111' stroke-width='.6'/>
<path d='M28 421 L27 426' stroke='#000' stroke-width='1.400'/>
<path d='M29 410.500 L36.300 412.500 L34.500 416 L27.800 414.500 Z' fill='#4f8fd0' stroke='#10131c' stroke-width='.5'/>
<path d='M29 410.800 l2.500 .7 l-1 3 l-2.300 -.5z' fill='#e8f2fa'/>
<path d='M31.500 416 l2.800 .8 l-.5 1.200 l-2.800 -.8z' fill='#e02020'/>
<text x='13.800' y='462.300' font-family='Liberation Sans,sans-serif' font-weight='bold' font-size='24.500' fill='url(#gA)' textLength='18' lengthAdjust='spacingAndGlyphs'>A</text>
<path d='M30.500 442.500 h6 v2 h-2 v19 h2 v2 h-6 v-2 h2 v-19 h-2 z' fill='#fff' stroke='#000' stroke-width='.8'/>
<rect x='14.500' y='488.500' width='21' height='21' fill='url(#gGrad)' stroke='#a6dcae' stroke-width='1'/>
<path d='M18.500 493.500 L31 504.500' stroke='#222' stroke-width='1.200'/>
<rect x='16.500' y='491.500' width='4' height='4' fill='#fff' stroke='#222' stroke-width='1'/>
<rect x='29' y='502.500' width='4' height='4' fill='#fff' stroke='#222' stroke-width='1'/>
<path d='M17.500 523.500 Q25 527 32.500 523.500 Q29.500 531 32.500 538.500 Q25 535 17.500 538.500 Q20.500 531 17.500 523.500 Z' fill='url(#gMesh)' transform='rotate(12 25 531)'/>
<rect x='15.3' y='521.4' width='4' height='4' fill='#fff' stroke='#000' stroke-width='1'/>
<rect x='30.299999999999997' y='521.4' width='4' height='4' fill='#fff' stroke='#000' stroke-width='1'/>
<rect x='15.3' y='536.5' width='4' height='4' fill='#fff' stroke='#000' stroke-width='1'/>
<rect x='30.299999999999997' y='536.5' width='4' height='4' fill='#fff' stroke='#000' stroke-width='1'/>
<path d='M28.500 558 L20 567.500' stroke='url(#gPen)' stroke-width='2.200'/>
<path d='M28 558.500 L20.500 567' stroke='#fff' stroke-width='.8'/>
<path d='M26 555.500 L31 560' stroke='#000' stroke-width='2.400'/>
<ellipse cx='32.500' cy='554.500' rx='4.200' ry='2.800' transform='rotate(-40 32.500 554.500)' fill='#000'/>
<ellipse cx='32.800' cy='553.500' rx='1.800' ry='.8' transform='rotate(-40 32.800 553.500)' fill='#666'/>
<path d='M19 570 q-1.500 2.500 -.5 3.500 q1.500 .5 1.800 -1 q.2 -1.500 -1.300 -2.500z' fill='#9cc4e8'/>
<ellipse cx='24.400' cy='605' rx='10' ry='1.800' fill='#a6e8b6'/>
<ellipse cx='24' cy='604.600' rx='5' ry='.9' fill='#e8fbe8'/>
<path d='M18.500 590.500 C21 594 22.500 599 23 604.500 L24.500 604.500 C24.500 599 23.500 594 22 590 Z' fill='#7fd690'/>
<path d='M22.500 596 L23.300 604.500 L24.300 604.500 L23.500 596 Z' fill='#f2fff2'/>
<path d='M18.500 590 L30.500 584 C33.500 583.500 35.500 586.500 36.500 592 L25 599.500 C22 598 19.500 594 18.500 590 Z' fill='url(#gBucket)' stroke='#10131c' stroke-width='.6'/>
<path d='M18.500 590 C20 594 22.500 598 25 599.500' stroke='#58b868' stroke-width='1.600' fill='none'/>
<path d='M20.500 588.500 L21.500 583 L24 586.500 M24 586.500 L24.500 594' stroke='#000' stroke-width='.9' fill='none'/>
<path d='M13.500 651.500 V642.500 H17 C21 641 21 630.500 26.500 630.500 C30 630.500 32 633 31 635 C29.500 632.500 27 633 26 635.500 C25 639 27 642 30 642.500 H34.500 V651.500 Z' fill='url(#gTweak)' stroke='#dedede' stroke-width='1'/>
<circle cx='16.5' cy='663' r='1' fill='#000'/>
<circle cx='15.5' cy='667' r='1' fill='#000'/>
<circle cx='19.5' cy='665.5' r='0.7' fill='#000'/>
<circle cx='22' cy='666.5' r='0.6' fill='#000'/>
<circle cx='19' cy='668.5' r='0.7' fill='#000'/>
<circle cx='17' cy='671.5' r='0.9' fill='#000'/>
<circle cx='21' cy='670' r='0.6' fill='#000'/>
<circle cx='23' cy='669' r='0.5' fill='#000'/>
<circle cx='18.5' cy='662.5' r='0.5' fill='#000'/>
<path d='M26.500 671 L33.500 669.500 L36 682 L27.500 683.500 L24.500 679 Z' fill='url(#gSpray)' stroke='#14200f' stroke-width='.5'/>
<path d='M26.300 669.500 L33.300 668 L33.600 669.600 L26.600 671.100 Z' fill='#ff9a2a'/>
<path d='M26.300 669 L33.300 667.500' stroke='#fff' stroke-width='.8'/>
<rect x='26.800' y='665.800' width='3.600' height='2.400' rx='.5' fill='#e8e8e8'/>
<path d='M26 693.500 L34.300 698.700 L28.600 708.600 L20.300 703.400 Z' fill='url(#gEras)'/>
<path d='M20.300 703.400 L28.600 708.600 L25.200 714 L16.900 708.600 Z' fill='#2a2af0'/>
<path d='M20.300 703.400 L24.500 706 L21 711.300 L16.900 708.600 Z' fill='#5a5af5'/>
<path d='M13 714.500 H20 M29 714.500 H37' stroke='#000' stroke-width='1.200'/>
<path d='M20 731 L17 741 M26.500 727.500 L32.500 731.500 V741' stroke='#000' stroke-width='1.100' fill='none'/>
<rect x='19' y='725' width='7' height='6' fill='#c6d8e8' stroke='#000' stroke-width='1' rx='.5'/>
<rect x='20' y='726' width='5' height='4' fill='none' stroke='#e8f0f6' stroke-width='.8'/>
<rect x='13.5' y='741' width='7' height='7' fill='#c6d8e8' stroke='#000' stroke-width='1' rx='.5'/>
<rect x='14.5' y='742' width='5' height='5' fill='none' stroke='#e8f0f6' stroke-width='.8'/>
<rect x='29' y='741' width='7' height='7' fill='#c6d8e8' stroke='#000' stroke-width='1' rx='.5'/>
<rect x='30' y='742' width='5' height='5' fill='none' stroke='#e8f0f6' stroke-width='.8'/>
<rect x='21.500' y='734' width='7.500' height='4.500' fill='#ffd23a' stroke='#000' stroke-width='.8'/>
<path d='M22.500 793.500 v9 l5 -4.500 z' fill='#f2f2f2'/>
<path d='M1160.500 794 v9 l5 -4.500 z' fill='#f2f2f2'/>
<path d='M1209.500 830.500 v9 l-5 -4.500 z' fill='#f2f2f2'/><path d='M1163 115 H1158 V103 H1164.5 L1168 106.5 V108.5' fill='none' stroke='#f2f2f2' stroke-width='2' />
<path d='M1164 113 H1170 M1167 110 V116' fill='none' stroke='#f2f2f2' stroke-width='1.8' />
<path d='M1158 136 H1164.5 L1168 139.5 V148 H1158 Z' fill='none' stroke='#f2f2f2' stroke-width='2' />
<path d='M1163 168 V178' fill='none' stroke='#f2f2f2' stroke-width='2' />
<path d='M1158.500 175 H1167.500 L1163 180 Z' fill='#f2f2f2'/>
<rect x='1156' y='180' width='14' height='2' fill='#f2f2f2'/>
<path d='M1159 205.500 V202 H1167 V205.500' fill='none' stroke='#f2f2f2' stroke-width='1.8' />
<path d='M1157 207 H1169 V212 H1157 Z' fill='none' stroke='#f2f2f2' stroke-width='2' />
<path d='M1159.500 210 H1166.500 V214.200 H1159.500 Z' fill='none' stroke='#f2f2f2' stroke-width='1.6' />
<path d='M1167 260 H1157 V248 H1163.500 L1167 251.500 V254' fill='none' stroke='#f2f2f2' stroke-width='2' />
<path d='M1163.500 253 H1170.500 L1167 257 Z' fill='#f2f2f2'/>
<path d='M1160.500 281 H1166 L1169 284 V293 H1159 V287' fill='none' stroke='#f2f2f2' stroke-width='2' />
<path d='M1155.500 288 H1162.500 L1159 284 Z' fill='#f2f2f2'/>
<path d='M1160 330 H1165.500 a4.500 4.500 0 0 1 0 9 H1156' fill='none' stroke='#4a4b58' stroke-width='1.8' />
<path d='M1161 326 V334 L1155.500 330 Z' fill='#4a4b58'/>
<path d='M1166 363 H1160.500 a4.500 4.500 0 0 0 0 9 H1170' fill='none' stroke='#4a4b58' stroke-width='1.8' />
<path d='M1165 359 V367 L1170.500 363 Z' fill='#4a4b58'/>
<path d='M1167 406.200 H1157 V419' fill='none' stroke='#f2f2f2' stroke-width='2' />
<rect x='1157' y='417' width='3' height='2' fill='#f2f2f2'/>
<path d='M1163 409.800 H1167 L1169.300 412 V418 H1163 Z' fill='none' stroke='#f2f2f2' stroke-width='1.9' />
<path d='M1163 438 L1168.500 443.500 H1165 V446 H1161 V443.500 H1157.500 Z' fill='#f2f2f2'/>
<rect x='1156' y='447' width='2' height='2' fill='#f2f2f2'/>
<rect x='1159' y='447' width='2' height='2' fill='#f2f2f2'/>
<rect x='1162' y='447' width='2' height='2' fill='#f2f2f2'/>
<rect x='1165' y='447' width='2' height='2' fill='#f2f2f2'/>
<rect x='1168' y='447' width='2' height='2' fill='#f2f2f2'/>
<rect x='1161' y='450' width='4' height='2' fill='#f2f2f2'/>
<path d='M1157.800 473 H1168.300 V484.200 H1157.800 Z' fill='none' stroke='#f2f2f2' stroke-width='2' />
<rect x='1160' y='471' width='6' height='2' fill='#f2f2f2'/>
<rect x='1161' y='477' width='4.500' height='1.300' fill='#f2f2f2'/><rect x='1161' y='480' width='4.500' height='1.300' fill='#f2f2f2'/>
<path d='M1156 517h4v2h-2v2h-2zM1170 517h-4v2h2v2h2zM1156 531h4v-2h-2v-2h-2zM1170 531h-4v-2h2v-2h2z' fill='#f2f2f2'/>
<circle cx='1163' cy='524' r='2' fill='#dcdcdc'/>
<path d='M1161.500 520 h3 l-1.500 -2 z M1161.500 528 h3 l-1.500 2 z M1159 522.500 v3 l-2 -1.500 z M1167 522.500 v3 l2 -1.500 z' fill='#d0d0d0'/>
<path d='M1166.9 560.8 L1169.7 563.3' stroke='#000' stroke-width='2.600' stroke-linecap='round'/><circle cx='1162.4' cy='556.3' r='6.600' fill='url(#gGlass)' stroke='#000' stroke-width='1.100'/><circle cx='1162.4' cy='556.3' r='5.600' fill='none' stroke='#fff' stroke-width='.6' opacity='.8'/>
<rect x='1158.800' y='552.300' width='4.400' height='4.400' fill='#ffd84a' stroke='#000' stroke-width='.9'/>
<rect x='1162' y='555.600' width='4.400' height='4.400' fill='#ffd84a' stroke='#000' stroke-width='.9'/>
<path d='M1166.9 593.8 L1169.7 596.3' stroke='#000' stroke-width='2.600' stroke-linecap='round'/><circle cx='1162.4' cy='589.3' r='6.600' fill='url(#gGlass)' stroke='#000' stroke-width='1.100'/><circle cx='1162.4' cy='589.3' r='5.600' fill='none' stroke='#fff' stroke-width='.6' opacity='.8'/>
<rect x='1159.600' y='585.300' width='5.800' height='7.800' fill='url(#gPage)' stroke='#000' stroke-width='1'/>
<rect x='1159' y='617' width='8.500' height='11.700' fill='url(#gPage)'/>
<path d='M1158 619 V616 H1161 M1165.500 616 H1168.500 V619 M1158 626.700 V629.700 H1161 M1165.500 629.700 H1168.500 V626.700' stroke='#000' stroke-width='1.200' fill='none'/>
<path d='M1164 662.5 H1156.500 V670' stroke='#c2d2e0' stroke-width='1.300' fill='none'/><path d='M1164 663.6 H1157.600 V670' stroke='#f4f8fb' stroke-width='.8' fill='none'/><rect x='1159' y='665' width='11' height='11' fill='url(#gDup)' stroke='#f4f8fb' stroke-width='1'/>
<path d='M1164 695.5 H1156.500 V703' stroke='#c2d2e0' stroke-width='1.300' fill='none'/><path d='M1164 696.6 H1157.600 V703' stroke='#f4f8fb' stroke-width='.8' fill='none'/><rect x='1159' y='698' width='11' height='11' fill='url(#gDup)' stroke='#f4f8fb' stroke-width='1'/>
<rect x='1161.500' y='703' width='6' height='4.500' fill='#ffd23a' stroke='#000' stroke-width='1'/>
<path d='M1162.800 703 v-1.500 a1.700 1.700 0 0 1 3.400 0 v1.500' stroke='#000' stroke-width='1.100' fill='none'/>
<path d='M1164 728.5 H1156.500 V736' stroke='#c2d2e0' stroke-width='1.300' fill='none'/><path d='M1164 729.6 H1157.600 V736' stroke='#f4f8fb' stroke-width='.8' fill='none'/><rect x='1159' y='731' width='11' height='11' fill='url(#gDup)' stroke='#f4f8fb' stroke-width='1'/>
<rect x='1161.500' y='736.500' width='6' height='4.500' fill='#8ec63f' stroke='#000' stroke-width='1'/>
<path d='M1162.800 735 a1.700 1.700 0 0 1 3.400 0 v1.500' stroke='#000' stroke-width='1.100' fill='none'/>
<path d='M1200 106 L1205.2 111.2' stroke='#000' stroke-width='1.100'/><path d='M1206.4 112.4 l-3.800 -.8 l3 -3 z' fill='#000'/><path d='M1198 101.6 l2.400 2.400 l-2.400 2.400 l-2.400 -2.400 z' fill='#2a2a8a' fill-opacity='.35' stroke='#1c1cff' stroke-width='1.400'/><path d='M1208.2 111.8 l2.400 2.400 l-2.400 2.400 l-2.400 -2.400 z' fill='#3a3a9a' fill-opacity='.3' stroke='#1e7a1e' stroke-width='1.200'/>
<path d='M1200 152 L1205.2 157.2' stroke='#000' stroke-width='1.100'/><path d='M1206.4 158.39999999999998 l-3.800 -.8 l3 -3 z' fill='#000'/><path d='M1198 147.6 l2.400 2.400 l-2.400 2.400 l-2.400 -2.400 z' fill='#2a2a8a' fill-opacity='.35' stroke='#1c1cff' stroke-width='1.400'/><path d='M1208.2 157.79999999999998 l2.400 2.400 l-2.400 2.400 l-2.400 -2.400 z' fill='#3a3a9a' fill-opacity='.3' stroke='#1e7a1e' stroke-width='1.200'/>
<path d='M1200 330 L1205.2 335.2' stroke='#000' stroke-width='1.100'/><path d='M1206.4 336.4 l-3.800 -.8 l3 -3 z' fill='#000'/><path d='M1198 325.6 l2.400 2.400 l-2.400 2.400 l-2.400 -2.400 z' fill='#2a2a8a' fill-opacity='.35' stroke='#1c1cff' stroke-width='1.400'/><path d='M1208.2 335.8 l2.400 2.400 l-2.400 2.400 l-2.400 -2.400 z' fill='#3a3a9a' fill-opacity='.3' stroke='#1e7a1e' stroke-width='1.200'/>
<path d='M1200 541 L1205.2 546.2' stroke='#000' stroke-width='1.100'/><path d='M1206.4 547.4000000000001 l-3.800 -.8 l3 -3 z' fill='#000'/><path d='M1198 536.6 l2.400 2.400 l-2.400 2.400 l-2.400 -2.400 z' fill='#2a2a8a' fill-opacity='.35' stroke='#1c1cff' stroke-width='1.400'/><path d='M1208.2 546.8000000000001 l2.400 2.400 l-2.400 2.400 l-2.400 -2.400 z' fill='#3a3a9a' fill-opacity='.3' stroke='#1e7a1e' stroke-width='1.200'/>
<path d='M1207.500 181 V193 M1196.500 192.700 H1207.500' stroke='#1c4420' stroke-width='1' stroke-dasharray='1.200 1.600' fill='none'/>
<path d='M1207.500 214 V223 M1196 225.500 H1204' stroke='#13141a' stroke-width='1' stroke-dasharray='1.200 1.600' fill='none'/>
<path d='M1207.500 223 l2.300 2.500 l-2.300 2.500 l-2.300 -2.500 z' fill='none' stroke='#1c4420' stroke-width='1'/>
<path d='M1207.500 253 V258.500 M1196 258.500 H1207.500' stroke='#13141a' stroke-width='1' stroke-dasharray='1.200 1.600' fill='none'/>
<circle cx='1207.500' cy='250.300' r='2' fill='none' stroke='#1c4420' stroke-width='1'/>
<path d='M1207.500 280 V291.500 M1196 291.500 H1207.500' stroke='#13141a' stroke-width='1' stroke-dasharray='1.200 1.600' fill='none'/>
<path d='M1197 285 v-2.500 l1.800 -1.500 l1.800 1.500 v2.500 z' fill='none' stroke='#1c4420' stroke-width='1'/>
<path d='M1196 359.500 C1202 360 1206.500 364 1203.600 372 C1207 371.500 1209.500 370 1210.400 367' stroke='#0b8a0b' stroke-width='1.300' fill='none'/>
<path d='M1196 406 L1210 392 M1196 401.200 L1210 396.600' stroke='#9a9a8e' stroke-width='1'/>
<circle cx='1203' cy='399' r='1.900' fill='#6a4fb0' stroke='#0a8a0a' stroke-width='1.200'/>
<path d='M1196.500 425.500 C1203 425 1206.500 429 1205 435 M1207 437 C1209 436 1210 434.500 1210.300 432.500' stroke='#8e8a7a' stroke-width='1' fill='none'/>
<path d='M1202.800 434.400 l2.800 2.800 l-2.800 2.800 l-2.800 -2.800 z' fill='none' stroke='#1e7a1e' stroke-width='1.300'/>
<path d='M1196 458 C1204 458 1207 464 1203.500 470.500 C1207 470 1209.500 468 1210.300 465.500' stroke='#a8a8a0' stroke-width='1' fill='none'/>
<rect x='1200.400' y='458' width='4' height='4' fill='#5a4ab0' stroke='#0a8a0a' stroke-width='1.200'/>
<path d='M1195.500 505.500 L1210.500 490.500' stroke='#a0a098' stroke-width='1'/>
<path d='M1198 505 L1199.500 499 M1200 506 L1201.500 500 M1206 496.500 L1207.500 490.500 M1208 497.500 L1209.500 491.500' stroke='#d40000' stroke-width='1.200'/>
<circle cx='1203' cy='498' r='1.900' fill='#5a4ab0' stroke='#0a8a0a' stroke-width='1.200'/>
<path d='M1207.800 569 V582 H1195' stroke='#70706c' stroke-width='1' fill='none'/>
<path d='M1200.300 572 l2.300 2.300 l-2.300 2.300 l-2.300 -2.300 z' fill='none' stroke='#1e7a1e' stroke-width='1.100'/>
<path d='M1207.800 603 V614 M1196 614.200 H1207.800' stroke='#000' stroke-width='1' stroke-dasharray='1.200 1.600' fill='none'/>
<path d='M1197 607.600 H1203 M1200 604.600 V610.600' stroke='#000' stroke-width='1'/>
<text x='1199.500' y='648.300' font-family='Liberation Sans,sans-serif' font-weight='bold' font-size='17.500' fill='#0a0a0a' textLength='12' lengthAdjust='spacingAndGlyphs'>A</text>
<path d='M1200 648.500 H1207' stroke='#0a8a0a' stroke-width='1'/>
<path d='M1198 645.700 l2.300 2.300 l-2.300 2.300 l-2.300 -2.300 z' fill='#3a3a9a' stroke='#1e7a1e' stroke-width='1.100'/>
<rect x='1198.500' y='683.200' width='10.500' height='13.200' fill='#000'/>
<rect x='1197.500' y='682.200' width='10.500' height='13.200' fill='url(#gPage)'/>
<path d='M1196.500 713.500 V730 M1201 713.500 V730 M1205 713.500 V730 M1209 713.500 V730 M1195 716 H1211 M1195 720.300 H1211 M1195 724.300 H1211 M1195 728.300 H1211' stroke='#1212ff' stroke-width='1.200' fill='none'/>
<path d='M1196.500 747 V763 M1208.900 747 V763 M1201 762.500 L1207 747' stroke='#1212ff' stroke-width='1.300' fill='none'/>
<path d='M214 868.800 C216.500 864 226 864 228.300 868.800 C226 873.500 216.500 873.500 214 868.800 Z' fill='#f4f4f4' stroke='#000' stroke-width='1'/>
<circle cx='221.300' cy='868.300' r='2.700' fill='#05050a'/><circle cx='220.300' cy='867.300' r='.8' fill='#fff'/>
<path d='M213.500 863.500 L216.500 866 M217 860.800 L218.500 864.500 M221.500 860 V864 M225.500 861 L224.500 864.500 M228.500 863.500 L226.500 866' stroke='#000' stroke-width='.9'/>
<rect x='248' y='869.200' width='10.200' height='5' fill='none' stroke='#f2f2f2' stroke-width='2'/>
<path d='M249.600 865.500 a3.400 3.400 0 0 1 6.800 -.5 v3.500' fill='none' stroke='#f2f2f2' stroke-width='2'/>
<circle cx='1131' cy='810' r='7' fill='#3a3c4a'/>
<path d='M1128.500 805.500 a5 5 0 0 0 0 9' stroke='#1a1a6a' stroke-width='1' stroke-dasharray='1 1.300' fill='none'/>
<circle cx='1131' cy='810' r='1.500' fill='#4a4c58'/>
</svg>
</body></html>
